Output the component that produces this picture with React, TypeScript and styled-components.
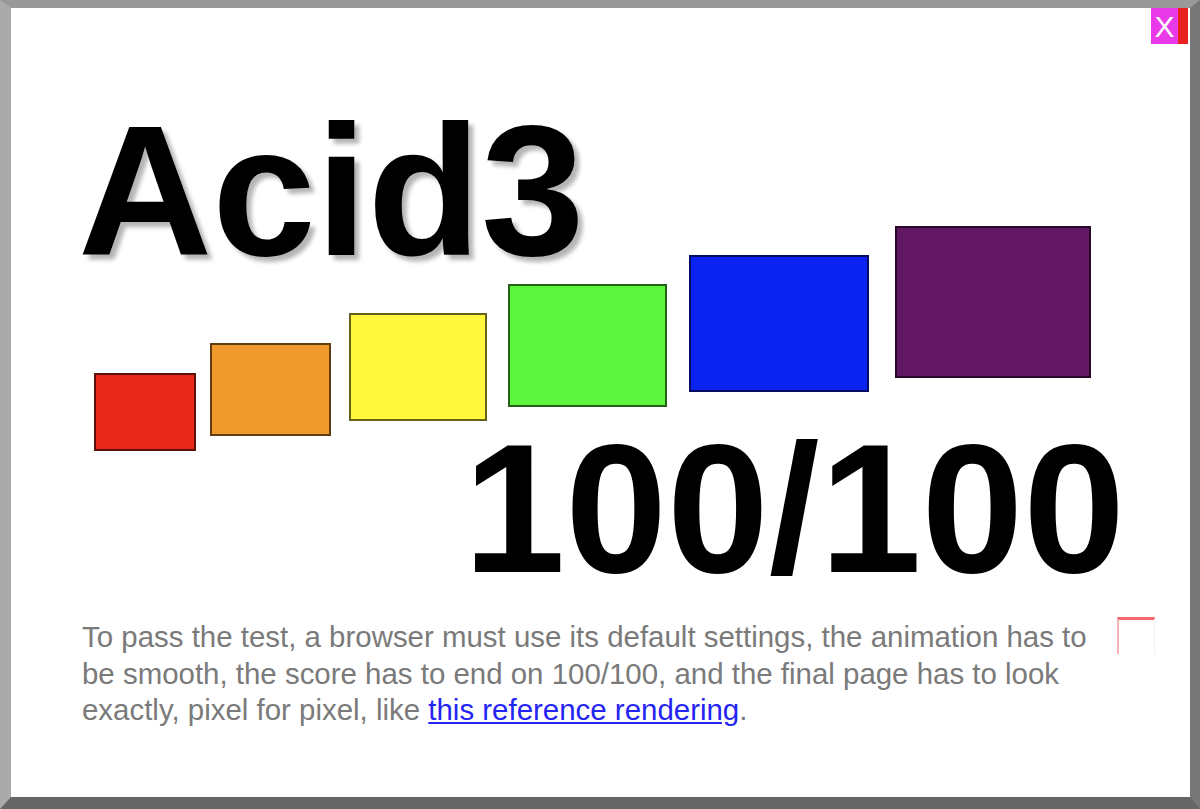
import styled, { createGlobalStyle } from "styled-components";

const GlobalStyle = createGlobalStyle`
  html, body {
    margin: 0;
    padding: 0;
    background: #888;
  }
  * {
    box-sizing: border-box;
  }
`;

const Page = styled.main`
  position: relative;
  width: 1200px;
  height: 809px;
  background: #fff;
  border-style: solid;
  border-width: 8px 10px 12px 11px;
  border-color: #999 #777 #666 #aaa;
  padding: 90px 65px 0 71px;
  font-family: "Liberation Sans", Arial, sans-serif;
  overflow: hidden;
`;

const Title = styled.h1`
  margin: 0 0 -58px -4px;
  font-size: 186px;
  line-height: 1;
  font-weight: bold;
  color: #000;
  text-shadow: 5px 5px 4px #b5b5b5;
`;

const Bars = styled.div`
  display: flex;
  align-items: flex-end;
  height: 225px;
  margin-left: 12px;
`;

const Bar = styled.div<{ $w: number; $h: number; $lift: number; $gap: number; $color: string }>`
  width: ${(p) => p.$w}px;
  height: ${(p) => p.$h}px;
  margin-left: ${(p) => p.$gap}px;
  margin-bottom: ${(p) => p.$lift}px;
  background: ${(p) => p.$color};
  border: 2px solid rgba(0, 0, 0, 0.6);
  flex-shrink: 0;
`;

const Score = styled.div`
  margin-top: -34px;
  font-size: 183px;
  line-height: 1;
  font-weight: bold;
  color: #000;
  text-align: right;
`;

const Footer = styled.div`
  display: flex;
  align-items: flex-start;
  margin: 19px -40px 0 0;
`;

const Instructions = styled.p`
  flex: none;
  width: 1022px;
  margin: 0;
  font-size: 29.45px;
  line-height: 36.5px;
  color: #7a7a7a;

  a {
    color: #2424f4;
    text-decoration: underline;
  }
`;

const LinkTest = styled.span`
  display: block;
  flex: none;
  width: 38px;
  height: 37px;
  margin: -2px 0 0 13px;
  border-top: 3px solid #f46a6a;
  border-left: 2px solid #f8b4b4;
  border-right: 1px solid #fdeeee;
`;

const CloseLink = styled.a`
  position: absolute;
  top: -1px;
  right: 2px;
  display: flex;
  height: 37px;
  text-decoration: none;
`;

const CloseMark = styled.span`
  display: flex;
  align-items: center;
  justify-content: center;
  width: 27px;
  background: #e83ae8;
  color: #fff;
  font-size: 30px;
  line-height: 1;
  padding-top: 3px;
`;

const CloseEdge = styled.span`
  width: 10px;
  background: #e82020;
`;

const bars = [
  { w: 102, h: 78, lift: 0, gap: 0, color: "#e8291c" },
  { w: 121, h: 93, lift: 15, gap: 14, color: "#f09a2c" },
  { w: 138, h: 108, lift: 30, gap: 18, color: "#fff83c" },
  { w: 159, h: 123, lift: 44, gap: 21, color: "#5cf43c" },
  { w: 180, h: 137, lift: 59, gap: 22, color: "#0a22f2" },
  { w: 196, h: 152, lift: 73, gap: 26, color: "#621763" },
];

const App = () => {
  return (
    <>
      <GlobalStyle />
      <Page>
        <CloseLink href="#">
          <CloseMark>X</CloseMark>
          <CloseEdge />
        </CloseLink>
        <Title>Acid3</Title>
        <Bars>
          {bars.map((b, i) => (
            <Bar key={i} $w={b.w} $h={b.h} $lift={b.lift} $gap={b.gap} $color={b.color} />
          ))}
        </Bars>
        <Score>100/100</Score>
        <Footer>
          <Instructions>
            To pass the test, a browser must use its default settings, the
            animation has to be smooth, the score has to end on 100/100, and
            the final page has to look exactly, pixel for pixel, like{" "}
            <a href="#">this reference rendering</a>.
          </Instructions>
          <LinkTest />
        </Footer>
      </Page>
    </>
  );
};

export default App;
